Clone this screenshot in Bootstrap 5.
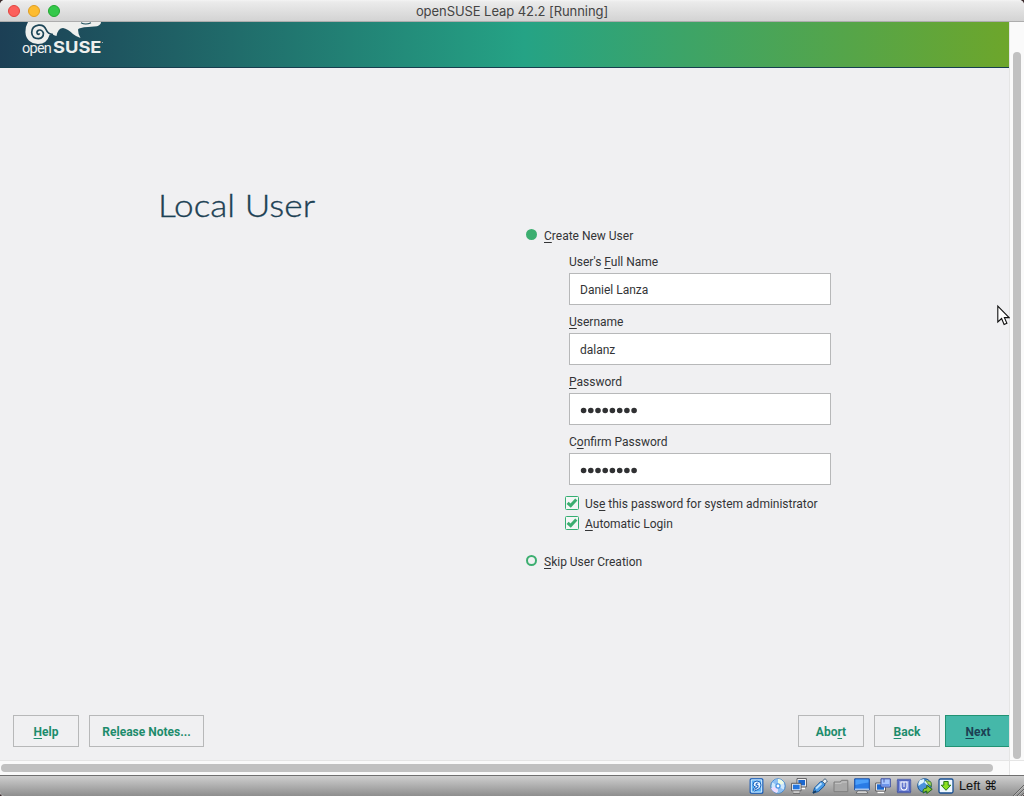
<!DOCTYPE html>
<html lang="en">
<head>
<meta charset="utf-8">
<meta name="viewport" content="width=device-width, initial-scale=1">
<title>openSUSE Leap 42.2 [Running]</title>
<link href="https://cdn.jsdelivr.net/npm/bootstrap@5.3.0/dist/css/bootstrap.min.css" rel="stylesheet">
<style>
body{background:#3a2a2c;font:12px/16px Roboto,"Liberation Sans",sans-serif;color:#333436}
.vm{height:796px;width:1024px;border-radius:5px 5px 3px 4px;background:#fff}
.titlebar{height:22px;background:linear-gradient(#f4f4f4 0,#ebebeb 2px,#d3d3d3);border-bottom:1px solid #adadad;padding-left:8px}
.lamp{width:12px;height:12px;border-radius:50%;border:1px solid;flex:none}
.caption{font:13px/20px Inter,sans-serif;color:#444;white-space:nowrap;padding-top:1px;letter-spacing:-.07px}
.guest{width:1009px;height:738px;background:#f0f0f2;flex:none}
.brand{height:46px;background:linear-gradient(90deg,#1c3f55,#25a385 52%,#6da62b);border-bottom:1px solid #173f4f}
.heading{font:300 32px/40px Lato,sans-serif;color:#1c4154;margin:0;padding:117px 0 0 158px;width:526px;flex:none;white-space:nowrap}
.heading span{display:inline-block;transform:scaleX(1.1);transform-origin:0 0;-webkit-text-stroke:.35px #1c4154}
.options{padding-top:160px}
.hot{text-decoration:underline 1px;text-underline-offset:2px;text-decoration-skip-ink:none}
.dot{width:11px;height:11px;border:2px solid #3cae70;border-radius:50%;flex:none;margin-top:-3px}
.dot.on{background:#3cae70}
.fields{padding-left:43px;width:305px}
.field-label{display:block;height:16px;margin:0 0 3px}
.fields .form-control{height:32px;border:1px solid #b7b8b9;border-radius:0;font-size:12px;line-height:16px;padding:2px 10px 0;color:#333436;background:#fff;margin-bottom:9px}
.tick{width:14px;height:14px;flex:none;margin-top:-2px}
.tickrow{height:20px;gap:6px;margin-left:39px}
.btn.plain{height:32px;border:1px solid #b7b8b9;border-radius:0;color:#1d8c6c;font-size:12px;line-height:16px;font-weight:700;padding:2px 0 0;width:66px}
.btn.release{width:115px}
.btn.next{width:64px;border-color:#219273;border-right:0;background:#45b8a9;color:#1c4154;padding-left:1px}
.vtrack{width:15px;height:739px;background:#fafafa;border-left:1px solid #e5e5e5;border-bottom:1px solid #e5e5e5;padding:30px 0 1px 3px}
.vthumb{width:8px;height:707px;border-radius:4px;background:#c1c1c1}
.htrack{width:1010px;height:15px;background:#fafafa;border-top:1px solid #e5e5e5;border-right:1px solid #e5e5e5;padding:3px 0 0 1px}
.hthumb{width:992px;height:8px;border-radius:4px;background:#c1c1c1}
.statusbar{height:21px;border-top:1px solid #707070;background:linear-gradient(#cfcfcf,#8e8e8e);padding-left:749px;border-radius:0 0 3px 4px}
.tray{gap:5px}
.tray svg{width:16px;height:16px;flex:none}
.hostkey{font:12.8px/18px "Liberation Sans",sans-serif;color:#111;padding-left:5px;white-space:nowrap}
.pointer{left:995.5px;top:304px}
</style>
<script src="https://cdn.jsdelivr.net/npm/bootstrap@5.3.0/dist/js/bootstrap.bundle.min.js"></script>
</head>
<body class="overflow-hidden">
<div class="vm d-flex flex-column overflow-hidden position-relative">
  <header class="titlebar d-flex align-items-center flex-shrink-0">
    <div class="d-flex" style="gap:8px">
      <span class="lamp" style="background:#fc605c;border-color:#e1443e"></span>
      <span class="lamp" style="background:#fdbc30;border-color:#df9d21"></span>
      <span class="lamp" style="background:#34c84a;border-color:#20a730"></span>
    </div>
    <div class="caption flex-grow-1 text-center" style="padding-right:60px">openSUSE Leap 42.2 [Running]</div>
  </header>
  <div class="d-flex flex-shrink-0" style="height:738px">
    <main class="guest d-flex flex-column">
      <div class="brand flex-shrink-0">
        <svg width="110" height="45" viewBox="0 22 110 45" fill="#eeefed" class="d-block">
          <path d="M28 22H101Q101 25 97 26.2L88 27Q79 27.5 78 29.5Q78 34 80.5 38Q76 36.5 73 34Q68 29 63 28Q58 28 56.5 36Q54 35.5 52 34L49.5 35Q47 44 38 44Q26 43 25.4 32Q25.5 26 28 22Z"/>
          <path d="M53 34.5Q47.8 34 46.3 30Q44 24.5 38.5 25.2Q31.8 26.2 31.7 32.5Q32 38.5 38.5 38.7Q43.7 38 43.4 33Q41.8 29.2 38.4 30.2Q36 32 37.5 34Q39 34.8 39.6 33.4" fill="none" stroke="#1c4658" stroke-width="1.7"/>
          <path d="M81 22.8Q85.5 25.3 91 22.8" fill="none" stroke="#1c4d5a" stroke-width="1.1"/>
          <text x="22" y="53" font-family="Roboto,sans-serif" font-size="14.5" letter-spacing="-.75">open</text>
          <text x="53" y="53" font-family="Inter,sans-serif" font-weight="700" font-size="15.5" textLength="48.5" lengthAdjust="spacingAndGlyphs">SUSE</text>
          <circle cx="102.5" cy="42.5" r=".6" opacity=".7"/>
        </svg>
      </div>
      <div class="d-flex flex-grow-1">
        <h1 class="heading"><span>Local User</span></h1>
        <form class="options">
          <div class="d-flex align-items-center" style="gap:7px"><span class="dot on"></span><span><span class="hot">C</span>reate New User</span></div>
          <div class="fields" style="padding-top:10px">
            <label class="field-label">User's <span class="hot">F</span>ull Name</label>
            <div class="form-control d-flex align-items-center">Daniel Lanza</div>
            <label class="field-label"><span class="hot">U</span>sername</label>
            <div class="form-control d-flex align-items-center">dalanz</div>
            <label class="field-label"><span class="hot">P</span>assword</label>
            <div class="form-control d-flex align-items-center"><svg width="60" height="8" viewBox="0 0 60 8"><path d="M3.6 4.5h.01M10.8 4.5h.01M18 4.5h.01M25.2 4.5h.01M32.4 4.5h.01M39.7 4.5h.01M46.9 4.5h.01M54.1 4.5h.01" stroke="#303133" stroke-width="5.6" stroke-linecap="round"/></svg></div>
            <label class="field-label">C<span class="hot">o</span>nfirm Password</label>
            <div class="form-control d-flex align-items-center"><svg width="60" height="8" viewBox="0 0 60 8"><path d="M3.6 4.5h.01M10.8 4.5h.01M18 4.5h.01M25.2 4.5h.01M32.4 4.5h.01M39.7 4.5h.01M46.9 4.5h.01M54.1 4.5h.01" stroke="#303133" stroke-width="5.6" stroke-linecap="round"/></svg></div>
          </div>
          <div class="tickrow d-flex align-items-center">
            <svg class="tick" viewBox="0 0 14 14"><rect x=".5" y=".5" width="13" height="13" rx="1" fill="#f4f6f6" stroke="#35ae72"/><path d="M2.6 6.8L5.7 9.6 11.3 3.6" fill="none" stroke="#3cae70" stroke-width="3"/></svg>
            <span class="text-nowrap">Us<span class="hot">e</span> this password for system administrator</span>
          </div>
          <div class="tickrow d-flex align-items-center">
            <svg class="tick" viewBox="0 0 14 14"><rect x=".5" y=".5" width="13" height="13" rx="1" fill="#f4f6f6" stroke="#35ae72"/><path d="M2.6 6.8L5.7 9.6 11.3 3.6" fill="none" stroke="#3cae70" stroke-width="3"/></svg>
            <span><span class="hot">A</span>utomatic Login</span>
          </div>
          <div class="d-flex align-items-center" style="gap:7px;padding-top:20px"><span class="dot"></span><span><span class="hot">S</span>kip User Creation</span></div>
        </form>
      </div>
      <div class="d-flex flex-shrink-0" style="padding:0 0 13px 13px">
        <button class="btn plain"><span class="hot">H</span>elp</button>
        <button class="btn plain release" style="margin-left:10px">Re<span class="hot">l</span>ease Notes...</button>
        <button class="btn plain ms-auto">Abo<span class="hot">r</span>t</button>
        <button class="btn plain" style="margin-left:10px"><span class="hot">B</span>ack</button>
        <button class="btn plain next" style="margin-left:5px"><span class="hot">N</span>ext</button>
      </div>
    </main>
    <div class="vtrack"><div class="vthumb"></div></div>
  </div>
  <div class="htrack flex-shrink-0"><div class="hthumb"></div></div>
  <footer class="statusbar d-flex align-items-center flex-shrink-0">
    <div class="tray d-flex">
      <svg viewBox="0 0 16 16"><rect x="1.2" y=".8" width="12.6" height="14.4" rx="1" fill="#5ab0f5" stroke="#1256b5" stroke-width="1.2"/><path d="M2.3 1.9H12.7V14.1H2.3Z" fill="none" stroke="#d9efff"/><path d="M4 7Q4 3 8 3Q12 3 12 7Q12 10 9 11.5L5.5 13Q3.5 12.5 4.5 10.5L6.5 9Q4.5 8.5 4 7Z" fill="#eaf6ff" stroke="#1962ba"/><path d="M9.3 5Q7 5 7 7Q9.5 7 9 9L5.5 11.5" fill="none" stroke="#1761c3" stroke-width="1.1"/></svg>
      <svg viewBox="0 0 16 16"><circle cx="8" cy="8" r="7.2" fill="#cfe8fb" stroke="#3a83cf"/><path d="M8 8L2 4Q5 1 8 1ZM8 8L14 12Q11 15 8 15Z" fill="#8dbff3"/><path d="M8 8L8 1Q12 1 14 5Z" fill="#eefce5"/><path d="M8 8L1 10Q2 14 7 15Z" fill="#eedcff"/><circle cx="8" cy="8" r="2.7" fill="#4a94e4"/><circle cx="8" cy="8" r="1.4" fill="#fff"/></svg>
      <svg viewBox="0 0 16 16"><path d="M6 .6H15.4V8.9H6Z" fill="#fff" stroke="#4f4f52" stroke-width=".9"/><path d="M7.3 2H14V7.4H7.3Z" fill="#1b67cf"/><path d="M9 10.5H14" stroke="#fff" stroke-width="1.5"/><path d="M.6 5.3H10V12.8H.6Z" fill="#fff" stroke="#4f4f52" stroke-width=".9"/><path d="M1.9 6.6H8.7V11.4H1.9Z" fill="#2476df"/><path d="M2.4 14.2H8.4" stroke="#fff" stroke-width="1.3"/><path d="M2 15.2H9" stroke="#4f4f52" stroke-width=".7"/></svg>
      <svg viewBox="0 0 16 16"><path d="M1 15L2.5 10 8.5 3.8Q12.5 2.5 13 6L12.3 8 6.5 13.5Z" fill="#4a9be7" stroke="#12549d"/><path d="M10.3 3.2L13 .7 15.4 3 12.9 5.9Z" fill="#edf2f6" stroke="#45617c"/><path d="M4 10.5L9.5 5.2" stroke="#bde3ff" stroke-width="2"/><path d="M1 15L4 13" stroke="#173c61" stroke-width="1.6"/></svg>
      <svg viewBox="0 0 16 16"><path d="M1 13.7V4H7L8.5 2.3H14.8V13.7Z" fill="#a8a8a8" stroke="#7e7e7e"/><path d="M2 5.3H8L9.5 4H13.8" fill="none" stroke="#c9c9c9"/></svg>
      <svg viewBox="0 0 16 16"><path d="M.7 .8H15.3V11.8H.7Z" fill="#2a7ce6" stroke="#144ca4"/><path d="M1.5 1.6H14.5V4.5Q8 5 1.5 7Z" fill="#4b9ffa"/><path d="M1 11.2H15" stroke="#edf5fd"/><path d="M3.5 13H12.5L13.8 15.2H2.2Z" fill="#fff" stroke="#555" stroke-width=".8"/></svg>
      <svg viewBox="0 0 16 16"><path d="M.7 5H10.5V13H.7Z" fill="#fff" stroke="#4f4f52" stroke-width=".9"/><path d="M2 6.3H9V11.7H2Z" fill="#1c69d0"/><path d="M2.5 14.5H9" stroke="#fff" stroke-width="1.3"/><path d="M6 .8H15.3V9H6Z" fill="#a8c6ff" stroke="#3b4ea2"/><path d="M9 1V4.5" stroke="#3b4ea2" stroke-width=".9"/><path d="M7 6H14.3V8H7Z" fill="#6e95ec"/></svg>
      <svg viewBox="0 0 16 16"><rect x="1.5" y="1.5" width="13" height="13" fill="#7184d6" stroke="#273c9c" stroke-width="1.5" stroke-dasharray="1 1"/><rect x="2.5" y="2.5" width="11" height="11" rx="1" fill="#8495df" stroke="#4154b3" stroke-width=".7"/><path d="M5 4H11V8.5Q11 12 8 12Q5 12 5 8.5Z" fill="#6478cf" stroke="#fff" stroke-width="1.1"/><path d="M8 4V9" stroke="#fff"/></svg>
      <svg viewBox="0 0 16 16"><circle cx="7.5" cy="7.5" r="6.8" fill="#4a92dc" stroke="#15538e"/><path d="M3 2L7 1Q8 5 4 6L1.5 8Q1 4 3 2ZM7 4L10 2 13 4 10 7Z" fill="#e1f6ff"/><path d="M6.5 15.2Q4.5 10.5 9.8 10V7.3L15.2 11.3 9.8 15.5V13Q7.5 13 6.5 15.2Z" fill="#8ace32" stroke="#24641b"/><path d="M8.5 2.5L14 4 14.5 8.5 11.5 6.5Z" fill="#a6d75a" stroke="#377122" stroke-width=".7"/></svg>
      <svg viewBox="0 0 16 16"><rect x="1" y="1" width="14" height="14" rx="1.5" fill="#eef7ff" stroke="#164e91" stroke-width="1.3"/><path d="M5.8 3.5H10.2V7.2H12.8L8 12.3 3.2 7.2H5.8Z" fill="#8be022" stroke="#267b13"/></svg>
    </div>
    <span class="hostkey">Left <span style="font-family:'DejaVu Sans',sans-serif">⌘</span></span>
    <svg class="ms-auto align-self-end" width="12" height="12" viewBox="0 0 12 12"><path d="M1 12L12 1M5 12L12 5M9 12L12 9" stroke="#616161"/><path d="M2 12L12 2M6 12L12 6M10 12L12 10" stroke="#c2c2c2" stroke-width=".6"/></svg>
  </footer>
  <svg class="pointer position-absolute" width="14" height="22" viewBox="0 0 14 22"><path d="M1.8 2V18L5.6 14.5 8.1 20.5 10.9 19.2 8.4 13.6H13.1Z" fill="#fff" stroke="#111" stroke-width="1.1"/></svg>
</div>
</body>
</html>
